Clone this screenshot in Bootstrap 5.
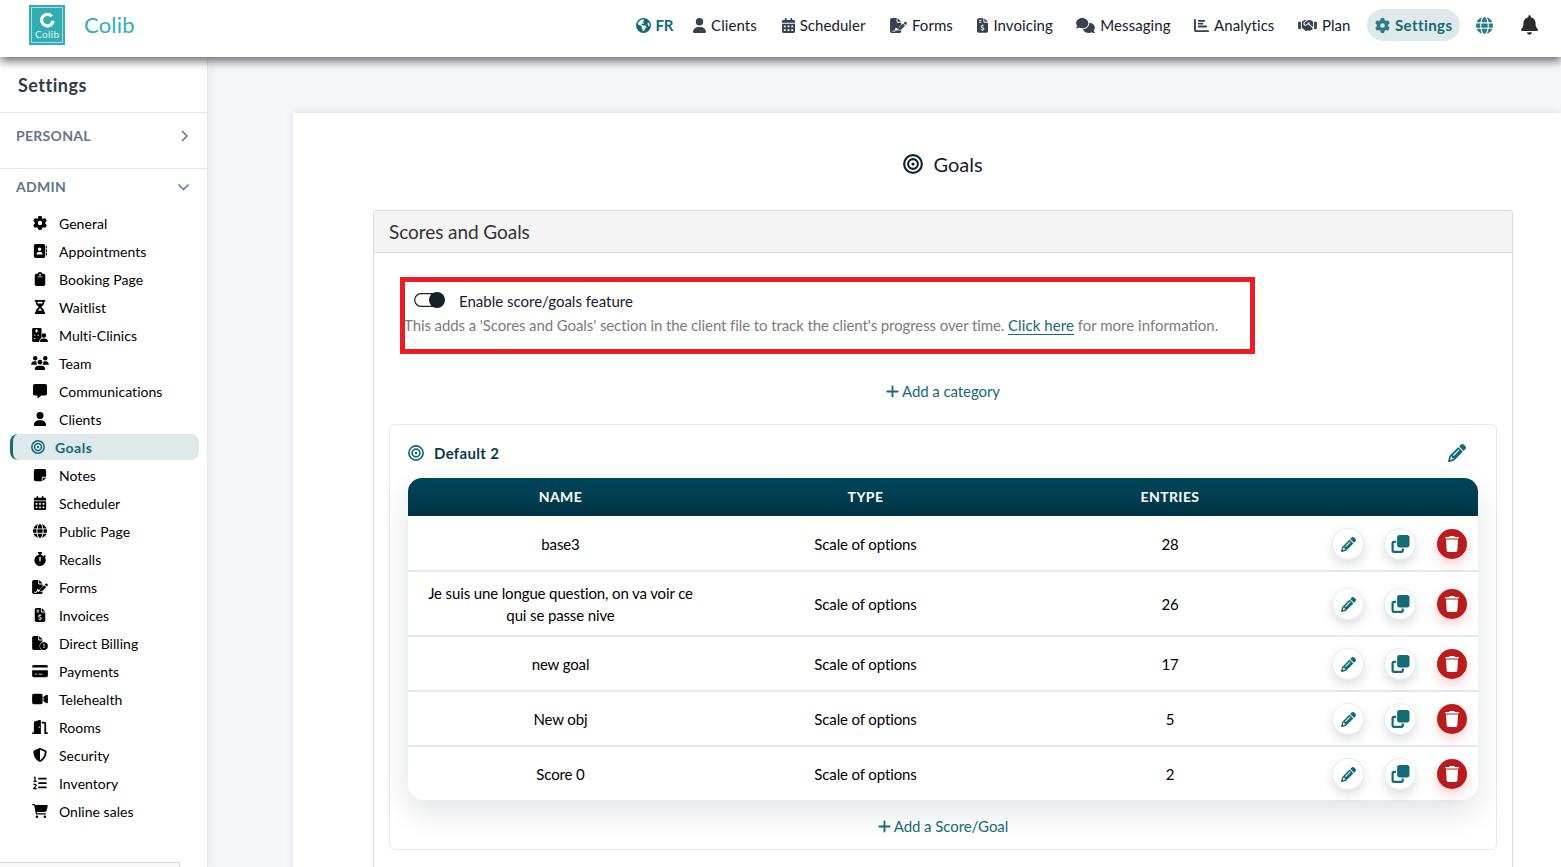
<!DOCTYPE html>
<html lang="en">
<head>
<meta charset="utf-8">
<meta name="viewport" content="width=device-width, initial-scale=1">
<title>Colib - Goals</title>
<link href="https://cdn.jsdelivr.net/npm/bootstrap@5.3.0/dist/css/bootstrap.min.css" rel="stylesheet">
<style>
:root{--teal:#146a75;--ink:#16212e}
body{font-family:Lato,"Liberation Sans",sans-serif;font-size:15px;line-height:22px;color:var(--ink);background:#f5f6fa;height:867px;overflow:hidden}
svg{display:block;flex:none;fill:currentColor}
.topbar{height:57px;padding-bottom:7px;background:#fff;box-shadow:0 4px 9px rgba(0,0,0,.58);z-index:5}
.logo{width:36px;height:40px;margin-left:29px}
.brandname{font-size:22px;color:#32aeb4;margin-left:19px;letter-spacing:.2px}
.topnav a{color:var(--ink);text-decoration:none;display:flex;align-items:center;gap:5px;height:32px;white-space:nowrap;letter-spacing:.06px}
.topnav a svg{height:15px;color:#36424f}
.topnav .lang{color:var(--teal);letter-spacing:-.3px;margin-right:20px}
.topnav .on{background:#dfe9eb;border-radius:16px;color:var(--teal);font-weight:700;width:93px;letter-spacing:.42px}
.topnav .on svg,.topnav .teal svg{color:#2d7b85}
.side{width:208px;background:#fff;border-right:1px solid #e2e8f0;box-shadow:2px 0 10px rgba(30,41,80,.05)}
.side-title{height:56px;border-bottom:1px solid #e2e8f0;padding:1px 18px 0;font-size:18px;font-weight:700;color:#2f3b4d;letter-spacing:.5px}
.side-group{color:#64748b;font-size:14px;font-weight:700;letter-spacing:.3px;padding:0 17px 0 16px}
.side-group.closed{height:56px;padding-bottom:9px;padding-right:18px;border-bottom:1px solid #e2e8f0}
.side-menu{padding:9px 8px 0 10px;font-size:14px;color:#000;letter-spacing:.04px}
.side-menu a{height:26px;margin-bottom:2px;padding-left:19px;display:flex;align-items:center;color:#000;text-decoration:none}
.side-menu a svg{width:22px;height:14px;margin-right:8px;position:relative;top:-1px}
.side-menu .on{background:#dfe9eb;border-left:3px solid var(--teal);border-radius:8px;padding-left:14px;color:var(--teal);font-weight:700;letter-spacing:.5px;margin-top:-1px;margin-bottom:3px;padding-top:1px}
.side-menu .on svg{margin-right:6px}
.statusbar{left:0;bottom:0;width:180px;height:5px;background:#f8f8f8;border:1px solid #d5d7d9;border-width:1px 1px 0 0}
.sheet{margin:56px 0 0 85px;background:#fff;box-shadow:0 0 8px rgba(30,41,59,.12);padding:37px 48px 0 80px}
.page-title{font-size:20px;height:28px;gap:10px;margin-bottom:32px}
.scores{border:1px solid #dcdcdc;border-radius:3px 3px 0 0;height:700px}
.scores-head{height:42px;background:#f4f4f4;border-bottom:1px solid #dcdcdc;font-size:19px;color:#333;padding-left:15px;letter-spacing:-.07px}
.notice{border:5px solid #ed1b24;width:855px;height:77px;margin:24px 0 0 26px;overflow:hidden}
.toggle{width:31px;height:16px;margin:-2px 14px 0 9px}
.hint{color:#7b7b7b;margin:2px 0 0 -1px}
.hint span{letter-spacing:-.095px}
.hint a{color:var(--teal);text-underline-offset:3px;letter-spacing:.08px}
.addlink{color:var(--teal);height:22px;gap:3px;letter-spacing:-.08px}
.group{margin:22px 15px 0;border:1px solid #e3e8ea;border-radius:6px;height:426px;padding:0 18px}
.group-head{height:53px;font-weight:700;color:#0a3a4a;padding-top:3px;letter-spacing:.33px}
.goals{width:1070px;background:#fff;border-radius:14px 14px 16px 16px;box-shadow:0 12px 30px rgba(15,23,42,.12);color:#000}
.goals-row{display:grid;grid-template-columns:305px 305px 304px 156px;align-items:center;text-align:center;height:55px;border-bottom:2px solid #e4e8f2;padding-top:1px;letter-spacing:-.13px}
.goals-row.tall{height:65px}
.goals-row:last-child{border-bottom:0;height:53px}
.goals-row.top{height:38px;border:0;background:linear-gradient(#00465c,#003443);border-radius:14px 14px 0 0;color:#fff;font-weight:700;font-size:14px;letter-spacing:.4px;padding:0;margin-bottom:1px}
.acts{gap:22px;padding-left:11px}
.act{width:30px;height:30px;border-radius:50%;background:#fff;color:var(--teal);box-shadow:0 0 0 1px #e8edf5,0 5px 12px rgba(15,23,42,.17)}
.act.del{background:#b81c1c;color:#fff;box-shadow:0 5px 12px rgba(220,38,38,.22)}
</style>
</head>
<body>
<svg width="0" height="0" class="position-absolute">
<symbol id="user" viewBox="0 0 448 512"><path d="M224 256A128 128 0 1 0 224 0a128 128 0 1 0 0 256zm-45.700 48C79.800 304 0 383.800 0 482.300C0 498.700 13.300 512 29.700 512l388.600 0c16.400 0 29.700-13.300 29.700-29.700C448 383.800 368.200 304 269.700 304z"/></symbol>
<symbol id="gear" viewBox="0 0 512 512"><path d="M495.9 166.6c3.2 8.7 .5 18.4-6.4 24.600l-43.300 39.400c1.100 8.300 1.700 16.800 1.700 25.400s-.6 17.100-1.700 25.400l43.300 39.400c6.900 6.200 9.600 15.900 6.400 24.600c-4.400 11.900-9.700 23.300-15.800 34.300l-4.700 8.100c-6.600 11-14 21.400-22.100 31.200c-5.900 7.200-15.700 9.600-24.500 6.800l-55.700-17.700c-13.400 10.300-28.200 18.900-44 25.400l-12.500 57.100c-2 9.100-9 16.300-18.200 17.800c-13.800 2.300-28 3.500-42.500 3.500s-28.700-1.200-42.500-3.500c-9.200-1.500-16.200-8.700-18.200-17.800l-12.500-57.100c-15.800-6.500-30.600-15.100-44-25.400L83.100 425.900c-8.800 2.800-18.600 .3-24.500-6.800c-8.100-9.800-15.500-20.200-22.100-31.200l-4.700-8.100c-6.100-11-11.400-22.400-15.800-34.300c-3.200-8.700-.5-18.400 6.400-24.600l43.300-39.400C64.600 273.100 64 264.600 64 256s.6-17.100 1.700-25.400L22.400 191.200c-6.900-6.200-9.600-15.900-6.400-24.600c4.400-11.900 9.700-23.300 15.800-34.300l4.700-8.100c6.600-11 14-21.400 22.100-31.200c5.900-7.200 15.700-9.600 24.500-6.800l55.700 17.700c13.400-10.300 28.200-18.900 44-25.400l12.500-57.100c2-9.100 9-16.300 18.200-17.800C227.300 1.200 241.500 0 256 0s28.700 1.200 42.500 3.500c9.200 1.500 16.200 8.700 18.200 17.800l12.500 57.100c15.800 6.500 30.600 15.100 44 25.400l55.700-17.700c8.800-2.800 18.600-.3 24.500 6.800c8.100 9.800 15.500 20.200 22.100 31.200l4.700 8.100c6.100 11 11.400 22.400 15.800 34.300zM256 336a80 80 0 1 0 0-160 80 80 0 1 0 0 160z"/></symbol>
<symbol id="cal" viewBox="0 0 448 512"><path fill-rule="evenodd" d="M128 0c17.700 0 32 14.300 32 32v32h128V32c0-17.700 14.300-32 32-32s32 14.300 32 32v32h48c26.500 0 48 21.500 48 48v48H0v-48C0 85.500 21.500 64 48 64h48V32c0-17.700 14.300-32 32-32zM0 192h448v272c0 26.500-21.500 48-48 48H48c-26.500 0-48-21.500-48-48zM64 256v64h64v-64zM192 256v64h64v-64zM320 256v64h64v-64zM64 384v64h64v-64zM192 384v64h64v-64zM320 384v64h64v-64z"/></symbol>
<symbol id="globe" viewBox="0 0 512 512"><path d="M352 256c0 22.200-1.200 43.600-3.300 64H163.300c-2.200-20.400-3.300-41.800-3.300-64s1.200-43.600 3.300-64H348.700c2.200 20.400 3.300 41.800 3.300 64zm28.800-64H503.900c5.300 20.500 8.100 41.900 8.100 64s-2.800 43.500-8.100 64H380.800c2.100-20.600 3.200-42 3.200-64s-1.100-43.400-3.200-64zm112.600-32H376.700c-10-63.900-29.800-117.400-55.300-151.600c78.300 20.700 142 77.500 171.900 151.600zm-149.100 0H167.700c6.100-36.400 15.500-68.600 27-94.700c10.500-23.600 22.200-40.700 33.500-51.500C239.400 3.200 248.700 0 256 0s16.600 3.200 27.800 13.800c11.300 10.800 23 27.900 33.500 51.500c11.600 26 20.900 58.200 27 94.700zm-209 0H18.600C48.600 85.900 112.200 29.100 190.600 8.400C165.100 42.600 145.300 96.100 135.300 160zM8.100 192H131.200c-2.100 20.600-3.200 42-3.200 64s1.100 43.400 3.200 64H8.100C2.800 299.500 0 278.100 0 256s2.800-43.500 8.100-64zM194.700 446.600c-11.600-26-20.900-58.200-27-94.600H344.300c-6.100 36.400-15.500 68.600-27 94.600c-10.500 23.600-22.200 40.700-33.500 51.500C272.600 508.800 263.300 512 256 512s-16.600-3.200-27.800-13.800c-11.300-10.800-23-27.900-33.500-51.500zM135.300 352c10 63.900 29.800 117.400 55.300 151.600C112.200 482.900 48.600 426.100 18.600 352H135.300zm358.100 0c-30 74.100-93.600 130.900-171.900 151.600c25.500-34.200 45.200-87.700 55.300-151.600H493.400z"/></symbol>
<symbol id="earth" viewBox="0 0 512 512"><path d="M57.700 193l9.400 16.400c8.300 14.500 21.900 25.200 38 29.800L163 255.700c17.200 4.900 29 20.600 29 38.500v39.900c0 11 6.200 21 16 25.900s16 14.900 16 25.900v39c0 15.600 14.900 26.900 29.900 22.600c16.100-4.600 28.600-17.500 32.700-33.800l2.800-11.200c4.200-16.900 15.200-31.400 30.300-40l8.100-4.600c15-8.500 24.200-24.500 24.200-41.700v-8.300c0-12.700-5.100-24.900-14.100-33.900l-3.900-3.900c-9-9-21.200-14.100-33.900-14.100H257c-11.100 0-22.100-2.900-31.800-8.400l-34.500-19.700c-4.300-2.500-7.600-6.500-9.200-11.200c-3.200-9.600 1.100-20 10.200-24.500l5.900-3c6.600-3.300 14.300-3.900 21.300-1.500l23.200 7.700c8.200 2.700 17.200-.4 21.900-7.500c4.700-7 4.200-16.300-1.200-22.800l-13.600-16.300c-10-12-9.900-29.500 .3-41.300l15.700-18.300c8.800-10.300 10.200-25 3.500-36.700l-2.400-4.200c-3.500-.2-6.900-.3-10.400-.3C163.100 48 84.400 108.900 57.700 193zM464 256c0-36.800-9.600-71.400-26.400-101.500L412 164.800c-15.700 6.300-23.800 23.800-18.500 39.800l16.900 50.700c3.500 10.400 12 18.300 22.600 20.900l29.100 7.300c1.200-9 1.800-18.200 1.800-27.500zM0 256a256 256 0 1 1 512 0A256 256 0 1 1 0 256z"/></symbol>
<symbol id="sign" viewBox="0 0 576 512"><path fill-rule="evenodd" d="M64 0C28.700 0 0 28.700 0 64v384c0 35.300 28.700 64 64 64h256c35.300 0 64-28.700 64-64v-19h-76c-13 0-22-5-27-14l-12-22-20 36c-7 13-27 13-34 0l-15-40-14 44c-7 22-25 31-46 31H88c-10 0-16-6-16-16s6-16 16-16h52c10 0 14-5 17-14l20-65c8-25 44-26 53-2l10 28 4-7c10-18 38-18 48 0l4 8 9-67 79-79V160H256c-18 0-32-14-32-32V0zM256 0v128h128z"/><path d="M549.800 139.700c-15.600-15.600-40.900-15.600-56.600 0l-29.400 29.400 71 71 29.400-29.400c15.600-15.600 15.600-40.900 0-56.600zM311.900 321c-4.100 4.100-7 9.200-8.400 14.900l-15 60.100c-1.400 5.500 .2 11.200 4.200 15.200s9.700 5.600 15.200 4.200l60.100-15c5.600-1.400 10.800-4.300 14.900-8.400l129.300-129.300-71-71z"/></symbol>
<symbol id="inv" viewBox="0 0 384 512"><path d="M64 0C28.700 0 0 28.700 0 64V448c0 35.300 28.700 64 64 64H320c35.300 0 64-28.700 64-64V160H256c-17.700 0-32-14.300-32-32V0H64zM256 0V128H384L256 0zM64 80c0-8.800 7.200-16 16-16h64c8.800 0 16 7.200 16 16s-7.200 16-16 16H80c-8.800 0-16-7.200-16-16zm0 64c0-8.800 7.200-16 16-16h64c8.800 0 16 7.200 16 16s-7.200 16-16 16H80c-8.800 0-16-7.200-16-16zm128 72c8.800 0 16 7.200 16 16v17.300c8.500 1.200 16.700 3.100 24.100 5.100c8.500 2.300 13.600 11 11.300 19.600s-11 13.600-19.600 11.300c-11.100-3-22-5.200-32.100-5.300c-8.400-.1-17.400 1.800-23.600 5.500c-5.700 3.400-8.100 7.300-8.100 12.800c0 3.700 1.300 6.500 7.300 10.100c6.900 4.100 16.600 7.100 29.200 10.900l.5 .1c11.300 3.400 25.300 7.600 36.300 14.600c12.100 7.600 22.400 19.700 22.700 38.200c.3 19.300-9.600 33.300-22.900 41.600c-7.700 4.800-16.400 7.600-25.100 9.100V440c0 8.800-7.200 16-16 16s-16-7.200-16-16V422.200c-11.200-2.100-21.700-5.700-30.900-8.900c-2.100-.7-4.200-1.400-6.200-2.100c-8.400-2.800-12.900-11.900-10.100-20.200s11.900-12.900 20.200-10.100c2.500 .8 4.800 1.600 7.100 2.400c13.600 4.600 24.600 8.400 36.300 8.700c9.100 .3 17.900-1.700 23.700-5.300c5.100-3.200 7.900-7.300 7.800-14c-.1-4.600-1.800-7.800-7.700-11.600c-6.800-4.300-16.500-7.400-29-11.200l-1.600-.5c-11-3.300-24.300-7.300-34.800-13.700c-12-7.200-22.600-18.900-22.700-37.300c-.1-19.400 10.800-32.800 23.800-40.500c7.500-4.400 15.800-7.200 24.100-8.700V232c0-8.800 7.200-16 16-16z"/></symbol>
<symbol id="chat" viewBox="0 0 640 512"><path d="M208 352c114.900 0 208-78.800 208-176S322.900 0 208 0S0 78.800 0 176c0 38.600 14.700 74.300 39.600 103.400c-3.500 9.400-8.700 17.700-14.200 24.700c-4.800 6.200-9.700 11-13.300 14.300c-1.800 1.600-3.300 2.900-4.300 3.700l-1.300 1C1 327.200-1.400 334.400 .8 340.900S9.100 352 16 352c21.800 0 43.800-5.600 62.100-12.500c9.200-3.500 17.800-7.400 25.300-11.400C134.100 343.300 169.800 352 208 352zM448 176c0 112.300-99.100 196.900-216.500 207C255.800 457.400 336.400 512 432 512c38.200 0 73.900-8.700 104.700-23.900c7.500 4 16 7.900 25.200 11.400c18.300 6.900 40.300 12.500 62.100 12.500c6.900 0 13.100-4.500 15.200-11.100c2.100-6.600-.2-13.800-5.800-17.900l-1.300-1c-1-.8-2.500-2-4.300-3.700c-3.600-3.300-8.500-8.100-13.300-14.300c-5.500-7-10.700-15.400-14.200-24.700c24.900-29 39.600-64.700 39.600-103.400c0-92.800-84.900-168.900-192.600-175.500c.4 5.100 .6 10.300 .6 15.500z"/></symbol>
<symbol id="chart" viewBox="0 0 512 512"><path d="M32 32c17.700 0 32 14.300 32 32V400c0 8.800 7.200 16 16 16H480c17.700 0 32 14.300 32 32s-14.300 32-32 32H80c-44.200 0-80-35.800-80-80V64C0 46.300 14.300 32 32 32zm96 64c0-17.700 14.300-32 32-32h192a32 32 0 0 1 0 64H160c-17.700 0-32-14.300-32-32zm32 64H288a32 32 0 0 1 0 64H160a32 32 0 0 1 0-64zm0 96H416a32 32 0 0 1 0 64H160a32 32 0 0 1 0-64z"/></symbol>
<symbol id="hands" viewBox="0 0 640 512"><path d="M323.400 85.200l-96.800 78.400c-16.100 13-19.200 36.400-7 53.100c12.900 17.800 38 21.300 55.300 7.800l99.300-77.200c7-5.400 17-4.200 22.500 2.800s4.200 17-2.800 22.500l-20.900 16.200L512 316.800V128h-.7l-3.900-2.500L434.800 79c-15.300-9.800-33.200-15-51.400-15c-21.800 0-43 7.500-60 21.200zm22.800 124.400l-51.700 40.200C263 274.300 217.300 268 193.700 235.600c-22.200-30.500-16.600-73.100 12.700-96.800l83.200-67.300c-11.600-4.900-24.100-7.400-36.800-7.400C234 64 215.700 69.600 200 80l-72 48V352h28.200l91.400 83.400c19.600 17.900 49.900 16.500 67.800-3.100c5.500-6.100 9.200-13.200 11.100-20.600l17 15.600c19.500 17.900 49.900 16.600 67.800-2.900c4.500-4.900 7.800-10.600 9.900-16.500c19.400 13 45.800 10.300 62.100-7.500c17.900-19.500 16.600-49.900-2.900-67.800l-134.200-123zM16 128c-8.800 0-16 7.200-16 16V352c0 17.700 14.300 32 32 32H64c17.700 0 32-14.300 32-32V128H16zM544 128V352c0 17.700 14.300 32 32 32h32c17.700 0 32-14.300 32-32V144c0-8.800-7.200-16-16-16H544z"/></symbol>
<symbol id="bell" viewBox="0 0 448 512"><path d="M224 0c-17.700 0-32 14.300-32 32V51.200C119 66 64 130.600 64 208v18.800c0 47-17.300 92.400-48.500 127.600l-7.400 8.300c-8.400 9.400-10.400 22.900-5.300 34.400S19.400 416 32 416H416c12.600 0 24-7.400 29.200-18.900s3.100-25-5.300-34.400l-7.400-8.300C401.300 319.200 384 273.900 384 226.800V208c0-77.400-55-142-128-156.800V32c0-17.700-14.300-32-32-32zm45.300 493.300c12-12 18.700-28.300 18.700-45.300H160c0 17 6.700 33.300 18.700 45.300s28.300 18.700 45.300 18.700s33.300-6.700 45.300-18.700z"/></symbol>
<symbol id="pencil" viewBox="0 0 512 512"><path d="M410.300 231l11.300-11.300-33.900-33.900-62.100-62.100L291.700 89.800l-11.300 11.300-22.600 22.600L58.600 322.900c-10.400 10.400-18 23.300-22.200 37.400L1 480.700c-2.500 8.400-.2 17.500 6.100 23.700s15.300 8.500 23.700 6.100l120.300-35.400c14.100-4.200 27-11.800 37.400-22.200L387.700 253.700 410.300 231zM160 399.400l-9.100 22.700c-4 3.100-8.500 5.400-13.300 6.900L59.400 452l23-78.100c1.400-4.900 3.800-9.400 6.900-13.300l22.700-9.100v32c0 8.800 7.200 16 16 16h32zM362.700 18.700L348.300 33.200 325.700 55.800 314.300 67.100l33.900 33.900 62.100 62.100 33.900 33.900 11.300-11.300 22.600-22.600 14.500-14.500c25-25 25-65.500 0-90.500L453.300 18.700c-25-25-65.500-25-90.500 0zm-47.400 168l-144 144c-6.200 6.200-16.400 6.200-22.600 0s-6.200-16.400 0-22.600l144-144c6.200-6.200 16.400-6.200 22.600 0s6.200 16.400 0 22.600z"/></symbol>
<symbol id="clone" viewBox="0 0 512 512"><path d="M288 448H64V224h64V160H64c-35.300 0-64 28.700-64 64V448c0 35.300 28.700 64 64 64H288c35.300 0 64-28.700 64-64V384H288v64zm-64-96H448c35.300 0 64-28.700 64-64V64c0-35.300-28.700-64-64-64H224c-35.300 0-64 28.700-64 64V288c0 35.300 28.700 64 64 64z"/></symbol>
<symbol id="trash" viewBox="0 0 448 512"><path d="M135.200 17.700L128 32H32C14.300 32 0 42 0 56S14.300 80 32 80H416c17.700 0 32-10 32-24s-14.300-24-32-24H320l-7.200-14.300C307.400 6.800 296.300 0 284.200 0H163.800c-12.100 0-23.200 6.800-28.600 17.700zM416 112H32L53.200 467c1.600 25.300 22.600 45 47.900 45H346.900c25.300 0 46.300-19.700 47.900-45L416 112z"/></symbol>
<symbol id="plus" viewBox="0 0 448 512"><path d="M256 80c0-17.700-14.300-32-32-32s-32 14.300-32 32V224H48c-17.700 0-32 14.300-32 32s14.300 32 32 32H192V432c0 17.700 14.300 32 32 32s32-14.300 32-32V288H400c17.700 0 32-14.300 32-32s-14.300-32-32-32H256V80z"/></symbol>
<symbol id="target" viewBox="0 0 16 16"><g fill="none" stroke="currentColor" stroke-width="1.700"><circle cx="8" cy="8" r="7.100"/><circle cx="8" cy="8" r="3.900"/></g><circle cx="8" cy="8" r="1.300"/></symbol>
<symbol id="book" viewBox="0 0 512 512"><path fill-rule="evenodd" d="M96 0a64 64 0 0 0-64 64v384a64 64 0 0 0 64 64h288a64 64 0 0 0 64-64V64a64 64 0 0 0-64-64zM240 128a64 64 0 1 1 0 128 64 64 0 0 1 0-128zm-32 160h64a80 80 0 0 1 80 80q0 16-16 16H144q-16 0-16-16a80 80 0 0 1 80-80z"/><path d="M480 64h16q16 0 16 16v64q0 16-16 16h-16zM480 192h16q16 0 16 16v64q0 16-16 16h-16zM480 320h16q16 0 16 16v64q0 16-16 16h-16z"/></symbol>
<symbol id="clip" viewBox="0 0 384 512"><path fill-rule="evenodd" d="M192 0c-42 0-77 27-90 64H64a64 64 0 0 0-64 64v320a64 64 0 0 0 64 64h256a64 64 0 0 0 64-64V128a64 64 0 0 0-64-64h-38C269 27 234 0 192 0zm0 64a32 32 0 1 1 0 64 32 32 0 0 1 0-64zM112 160h160a16 16 0 0 1 0 32H112a16 16 0 0 1 0-32z"/></symbol>
<symbol id="hour" viewBox="0 0 384 512"><path fill-rule="evenodd" d="M32 0a32 32 0 0 0 0 64v11c0 42 17 83 47 113l68 68-68 68c-30 30-47 71-47 113v11a32 32 0 0 0 0 64h320a32 32 0 0 0 0-64v-11c0-42-17-83-47-113l-68-68 68-68c30-30 47-71 47-113V64a32 32 0 0 0 0-64zm64 75V64h192v11c0 19-6 37-16 53H112c-10-16-16-34-16-53zm16 309 12-15 68-68 68 68 12 15z"/></symbol>
<symbol id="clinic" viewBox="0 0 576 512"><path fill-rule="evenodd" d="M48 0a48 48 0 0 0-48 48v416a48 48 0 0 0 48 48h208q-2-110 88-155V48a48 48 0 0 0-48-48zM144 48v40h-40v40h40v40h40v-40h40V88h-40V48zM64 250v24h60v-24zM190 250v24h60v-24zM64 370v24h60v-24z"/><circle cx="432" cy="270" r="82"/><path d="M288 490c0-62 45-107 104-107h80c59 0 104 45 104 107q0 22-22 22H310q-22 0-22-22z"/></symbol>
<symbol id="team" viewBox="0 0 640 512"><circle cx="144" cy="80" r="80"/><circle cx="512" cy="80" r="80"/><circle cx="320" cy="224" r="88"/><path d="M0 299c0-59 48-107 107-107h42q24 0 45 10-14 65 24 118H21q-21 0-21-21zM405 320q55-50 41-118 20-10 45-10h42c59 0 107 48 107 107q0 21-21 21zM128 485c0-73 60-133 133-133h118c73 0 133 60 133 133q0 27-27 27H155q-27 0-27-27z"/></symbol>
<symbol id="msg" viewBox="0 0 512 512"><path d="M64 0a64 64 0 0 0-64 64v288a64 64 0 0 0 64 64h96v80c0 13 15 21 26 13l124-93h138a64 64 0 0 0 64-64V64a64 64 0 0 0-64-64z"/></symbol>
<symbol id="note" viewBox="0 0 448 512"><path d="M64 32A64 64 0 0 0 0 96v320a64 64 0 0 0 64 64h224V368a48 48 0 0 1 48-48h112V96a64 64 0 0 0-64-64zM448 352H336q-16 0-16 16v112z"/></symbol>
<symbol id="watch" viewBox="0 0 448 512"><path fill-rule="evenodd" d="M176 0a32 32 0 0 0 0 64h16v34A208 208 0 1 0 405 197l22-22a32 32 0 0 0-45-45l-25 25a207 207 0 0 0-101-57V64h16a32 32 0 0 0 0-64zm48 176c14 0 24 10 24 24v120a24 24 0 0 1-48 0V200c0-14 10-24 24-24z"/></symbol>
<symbol id="bill" viewBox="0 0 576 512"><path d="M64 0A64 64 0 0 0 0 64v384a64 64 0 0 0 64 64h256q12 0 22-4a176 176 0 0 1 42-306v-42H256a32 32 0 0 1-32-32V0zM256 0v128h128z"/><path fill-rule="evenodd" d="M432 224a144 144 0 1 1 0 288 144 144 0 0 1 0-288zm-18 60v92h36v-92zm18 110a24 24 0 1 0 0 48 24 24 0 0 0 0-48z"/></symbol>
<symbol id="pay" viewBox="0 0 576 512"><path fill-rule="evenodd" d="M64 32A64 64 0 0 0 0 96v32h576V96a64 64 0 0 0-64-64zM0 224v192a64 64 0 0 0 64 64h448a64 64 0 0 0 64-64V224zM112 352h64a16 16 0 0 1 0 32h-64a16 16 0 0 1 0-32zm128 0h128a16 16 0 0 1 0 32H240a16 16 0 0 1 0-32z"/></symbol>
<symbol id="video" viewBox="0 0 576 512"><path d="M64 64A64 64 0 0 0 0 128v256a64 64 0 0 0 64 64h256a64 64 0 0 0 64-64V128a64 64 0 0 0-64-64zM416 176v160l111 74c21 14 49 0 49-26V128c0-26-28-40-49-26z"/></symbol>
<symbol id="door" viewBox="0 0 576 512"><path fill-rule="evenodd" d="M320 32c0-20-19-34-38-29L106 47a56 56 0 0 0-42 54v347H32a32 32 0 0 0 0 64h288zM256 224c13 0 24 14 24 32s-11 32-24 32-24-14-24-32 11-32 24-32zM352 64v64h96v352a32 32 0 0 0 32 32h64a32 32 0 0 0 0-64h-32V128a64 64 0 0 0-64-64z"/></symbol>
<symbol id="shield" viewBox="0 0 512 512"><path fill-rule="evenodd" d="M256 0c4.600 0 9.200 1 13.400 2.900L457.700 82.800c22 9.300 38.400 31 38.300 57.200c-.5 99.200-41.300 280.700-213.600 363.200c-16.700 8-36.100 8-52.800 0C57.300 420.700 16.500 239.200 16 140c-.1-26.200 16.300-47.900 38.300-57.200L242.700 2.900C246.800 1 251.400 0 256 0zm0 66.800V444.800C394 378 431.100 230.100 432 141.400z"/></symbol>
<symbol id="list" viewBox="0 0 16 16"><path d="M6 2h9.500v2H6zM6 7h9.500v2H6zM6 12h9.500v2H6z"/><path fill="none" stroke="currentColor" stroke-width="1.400" d="M1 1.500h1.300v4.600M.6 6.200h3.600M.8 10.200c.6-1.200 3-1 2.800.4-.1 1.200-1.800 2.200-2.700 3.700h3.400"/></symbol>
<symbol id="cart" viewBox="0 0 576 512"><path d="M0 24C0 10.700 10.700 0 24 0H69.500c22 0 41.500 12.800 50.600 32h411c26.300 0 45.500 25 38.600 50.400l-41 152.300c-8.500 31.400-37 53.300-69.500 53.300H170.700l5.400 28.500c2.200 11.300 12.100 19.500 23.600 19.500H488c13.300 0 24 10.700 24 24s-10.700 24-24 24H199.700c-34.600 0-64.300-24.600-70.700-58.500L77.400 54.500c-.7-3.800-4-6.500-7.900-6.500H24C10.700 48 0 37.300 0 24zM128 464a48 48 0 1 1 96 0 48 48 0 1 1 -96 0zm336-48a48 48 0 1 1 0 96 48 48 0 1 1 0-96z"/></symbol>
</svg>

<header class="topbar d-flex align-items-center position-relative">
  <svg class="logo" viewBox="0 0 36 40"><rect width="36" height="40" fill="#31adb3"/><rect x="2.500" y="2.500" width="31" height="35" fill="none" stroke="#a9dcde"/><path d="M22.700 11.300a5.800 5.800 0 1 0 1.400 4.500" fill="none" stroke="#fff" stroke-width="3.200"/><text x="18" y="33" fill="#e5f6f6" font-size="10" text-anchor="middle" textLength="24">Colib</text></svg>
  <span class="brandname">Colib</span>
  <nav class="topnav d-flex align-items-center ms-auto">
    <a href="#" class="lang fw-bold"><svg width="15" style="color:var(--teal)"><use href="#earth"/></svg>FR</a>
    <a href="#" style="margin-right:25px"><svg width="13"><use href="#user"/></svg>Clients</a>
    <a href="#" style="margin-right:24.500px"><svg width="13"><use href="#cal"/></svg>Scheduler</a>
    <a href="#" style="margin-right:24.500px"><svg width="17"><use href="#sign"/></svg>Forms</a>
    <a href="#" style="margin-right:23.500px"><svg width="11"><use href="#inv"/></svg>Invoicing</a>
    <a href="#" style="margin-right:23.500px"><svg width="19"><use href="#chat"/></svg>Messaging</a>
    <a href="#" style="margin-right:23.500px"><svg width="15"><use href="#chart"/></svg>Analytics</a>
    <a href="#" style="margin-right:16.500px"><svg width="19"><use href="#hands"/></svg>Plan</a>
    <a href="#" class="on px-2" style="margin-right:16px"><svg width="15"><use href="#gear"/></svg>Settings</a>
    <a href="#" class="teal" style="margin-right:28px"><svg style="width:17px;height:17px"><use href="#globe"/></svg></a>
    <a href="#" style="margin-right:23px"><svg style="width:17px;height:20px;color:#2b2b2b"><use href="#bell"/></svg></a>
  </nav>
</header>

<div class="d-flex" style="height:810px">
  <aside class="side flex-shrink-0 position-relative">
    <div class="side-title d-flex align-items-center">Settings</div>
    <div class="side-group closed d-flex justify-content-between align-items-center"><span>PERSONAL</span><svg width="10" height="12" viewBox="0 0 10 12"><path d="M3 1l5 5-5 5" fill="none" stroke="#64748b" stroke-width="1.500"/></svg></div>
    <div class="side-group d-flex justify-content-between align-items-center" style="height:36px"><span>ADMIN</span><svg width="13" height="10" viewBox="0 0 13 10"><path d="M1.500 2.500l5 5 5-5" fill="none" stroke="#64748b" stroke-width="1.500"/></svg></div>
    <nav class="side-menu">
      <a href="#" style="margin-top:-3px"><svg><use href="#gear"/></svg>General</a>
      <a href="#"><svg><use href="#book"/></svg>Appointments</a>
      <a href="#"><svg><use href="#clip"/></svg>Booking Page</a>
      <a href="#"><svg><use href="#hour"/></svg>Waitlist</a>
      <a href="#"><svg><use href="#clinic"/></svg>Multi-Clinics</a>
      <a href="#"><svg><use href="#team"/></svg>Team</a>
      <a href="#"><svg><use href="#msg"/></svg>Communications</a>
      <a href="#"><svg><use href="#user"/></svg>Clients</a>
      <a href="#" class="on"><svg><use href="#target"/></svg>Goals</a>
      <a href="#"><svg><use href="#note"/></svg>Notes</a>
      <a href="#"><svg><use href="#cal"/></svg>Scheduler</a>
      <a href="#"><svg><use href="#globe"/></svg>Public Page</a>
      <a href="#"><svg><use href="#watch"/></svg>Recalls</a>
      <a href="#"><svg><use href="#sign"/></svg>Forms</a>
      <a href="#"><svg><use href="#inv"/></svg>Invoices</a>
      <a href="#"><svg><use href="#bill"/></svg>Direct Billing</a>
      <a href="#"><svg><use href="#pay"/></svg>Payments</a>
      <a href="#"><svg><use href="#video"/></svg>Telehealth</a>
      <a href="#"><svg><use href="#door"/></svg>Rooms</a>
      <a href="#"><svg><use href="#shield"/></svg>Security</a>
      <a href="#"><svg><use href="#list"/></svg>Inventory</a>
      <a href="#"><svg><use href="#cart"/></svg>Online sales</a>
    </nav>
    <div class="statusbar position-absolute"></div>
  </aside>
  <main class="flex-grow-1">
    <div class="sheet">
      <h1 class="page-title d-flex justify-content-center align-items-center fw-normal"><svg width="20" height="20"><use href="#target"/></svg>Goals</h1>
      <section class="scores">
        <div class="scores-head d-flex align-items-center">Scores and Goals</div>
        <div class="notice">
          <div class="d-flex align-items-center" style="margin-top:8px;height:22px"><svg class="toggle" viewBox="0 0 31 16"><rect x=".7" y="1.700" width="26" height="12.600" rx="6.300" fill="none" stroke="#16212e" stroke-width="1.200"/><circle cx="23" cy="8" r="8"/></svg>Enable score/goals feature</div>
          <div class="hint text-nowrap"><span>This adds a 'Scores and Goals' section in the client file to track the client's progress over time. </span><a href="#">Click here</a> for more information.</div>
        </div>
        <div class="addlink d-flex justify-content-center align-items-center" style="margin-top:26px"><svg width="13" height="15"><use href="#plus"/></svg>Add a category</div>
        <div class="group">
          <div class="group-head d-flex align-items-center"><svg width="16" height="16" style="color:var(--teal);margin-right:10px"><use href="#target"/></svg>Default 2<svg class="ms-auto" width="18" height="18" style="color:var(--teal);margin-right:12px"><use href="#pencil"/></svg></div>
          <div class="goals" id="goals">
            <div class="goals-row top"><span>NAME</span><span>TYPE</span><span>ENTRIES</span></div>
          </div>
          <div class="addlink d-flex justify-content-center align-items-center" style="margin-top:15px"><svg width="13" height="15"><use href="#plus"/></svg>Add a Score/Goal</div>
        </div>
      </section>
    </div>
  </main>
</div>
<script>
const rows = [
  ['base3', 28],
  ['Je suis une longue question, on va voir ce<br>qui se passe nive', 26],
  ['new goal', 17],
  ['New obj', 5],
  ['Score 0', 2]
];
const act = (icon, w, h, cls = '') => `<span class="act ${cls} d-flex align-items-center justify-content-center"><svg width="${w}" height="${h}"><use href="#${icon}"/></svg></span>`;
document.getElementById('goals').insertAdjacentHTML('beforeend', rows.map(([name, n]) =>
  `<div class="goals-row ${name.includes('<br>') ? 'tall' : ''}"><span>${name}</span><span>Scale of options</span><span>${n}</span>
   <div class="acts d-flex">${act('pencil', 15, 15)}${act('clone', 19, 18)}${act('trash', 14, 16, 'del')}</div></div>`).join(''));
</script>
<script src="https://cdn.jsdelivr.net/npm/bootstrap@5.3.0/dist/js/bootstrap.bundle.min.js"></script>
</body>
</html>
